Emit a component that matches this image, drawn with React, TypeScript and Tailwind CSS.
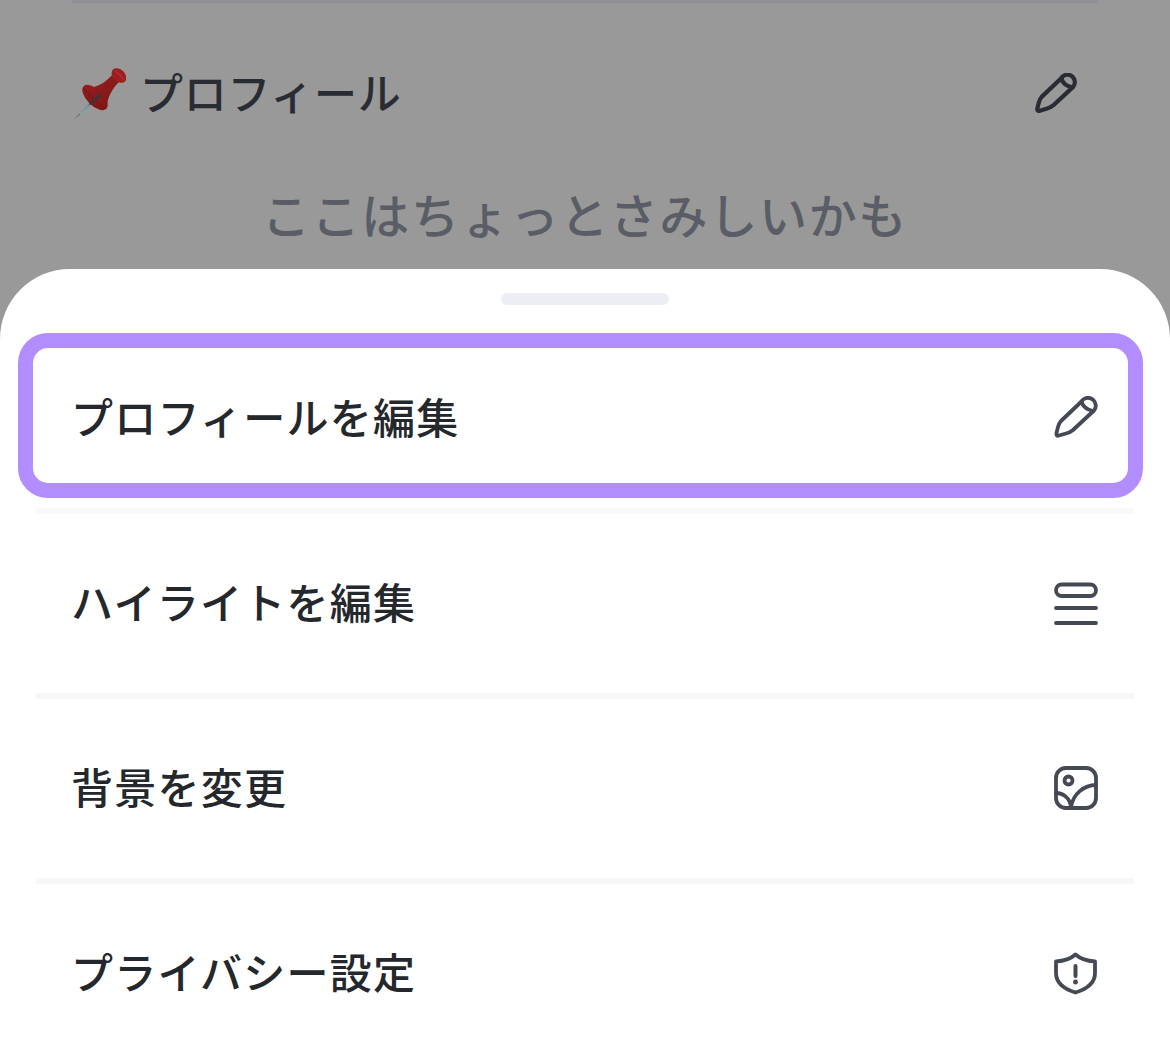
const font = { fontFamily: '"Noto Sans CJK JP", sans-serif' };

const PencilIcon = ({ className, sw = 3.8 }: { className: string; sw?: number }) => (
  <svg viewBox="0 0 44 44" fill="none" stroke="currentColor" strokeWidth={sw} strokeLinecap="round" strokeLinejoin="round" className={className}>
    <path d="M27.5 5.5 L7 25 Q5 27 4 31 L2.5 37 Q2 40.5 5 39.5 L12 37.5 Q16 36.5 19 34 L40 14.5 A7.8 7.8 0 0 0 28.5 4 Z" />
    <path d="M27.5 5.5 Q29.5 13 39 15" />
  </svg>
);

const LinesIcon = () => (
  <svg viewBox="0 0 44 44" fill="none" stroke="currentColor" strokeWidth={3.8} strokeLinecap="round" className="w-[44px] h-[44px]">
    <rect x="2" y="3.5" width="40" height="11.5" rx="5.7" />
    <path d="M2 27H42" />
    <path d="M2 42H42" />
  </svg>
);

const ImageIcon = () => (
  <svg viewBox="0 0 44 44" fill="none" stroke="currentColor" strokeWidth={3.8} strokeLinecap="round" className="w-[44px] h-[44px]">
    <rect x="2" y="2" width="40" height="40" rx="10" />
    <circle cx="14.5" cy="14.5" r="4" />
    <path d="M42 19C30 19 19 28 17 41" />
    <path d="M2 27C9 27 16 32 17 41" />
  </svg>
);

const ShieldIcon = () => (
  <svg viewBox="0 0 44 44" fill="none" stroke="currentColor" strokeWidth={3.8} strokeLinecap="round" strokeLinejoin="round" className="w-[44px] h-[44px]">
    <path d="M21.5 3.5C26 7.5 33 10 41 10.5V22C41 32 33 38 21.5 41.5C10 38 2 32 2 22V10.5C10 10 17 7.5 21.5 3.5Z" />
    <path d="M21.5 15V25" strokeWidth={4} />
    <path d="M21.5 31V31.2" strokeWidth={4.8} />
  </svg>
);

const PinIcon = () => (
  <svg viewBox="0 0 52 52" className="w-[52px] h-[52px] shrink-0">
    <defs>
      <linearGradient id="pinBody" x1="0" y1="0" x2="1" y2="1">
        <stop offset="0" stopColor="#9c1e1e" />
        <stop offset="1" stopColor="#761717" />
      </linearGradient>
    </defs>
    <ellipse cx="21" cy="29.5" rx="16" ry="8" transform="rotate(45 21 29.5)" fill="url(#pinBody)" />
    <path d="M15 20C24 19 32 14 38 7L45 14C39 20 34 28 33 37C28 32 20 26 15 20Z" fill="url(#pinBody)" />
    <ellipse cx="45" cy="7.5" rx="8.5" ry="6" transform="rotate(45 45 7.5)" fill="#9c1e1e" />
    <path d="M41 3C44 5 48 9 50 12" stroke="#b83333" strokeWidth="1.2" fill="none" />
    <path d="M9 20C15 26 24 35 31 40" stroke="#6d1515" strokeWidth="1" fill="none" />
    <path d="M0 51.5L25 25.5L27 27.5Z" fill="#2c3a42" />
    <path d="M5 46L15 36L16 37L6.5 46.5Z" fill="#7fa6b8" />
  </svg>
);

const rows = [
  { label: "ハイライトを編集", icon: <LinesIcon /> },
  { label: "背景を変更", icon: <ImageIcon /> },
  { label: "プライバシー設定", icon: <ShieldIcon /> },
];

export default function App() {
  return (
    <div className="w-[1170px] h-[1063px] overflow-hidden bg-[#999999] flex flex-col" style={font}>
      <div className="h-[269px] shrink-0 flex flex-col">
        <div className="mx-[72px] h-[3px] bg-[#8f8f98]" />
        <div className="flex items-center justify-between pl-[74px] pr-[93px] mt-[65px]">
          <div className="flex items-center gap-[14px]">
            <PinIcon />
            <span className="block h-[52px] text-[43px] leading-[46px] font-medium tracking-[0.7px] text-[#2a2c33]">プロフィール</span>
          </div>
          <span className="text-[#2a2c33]"><PencilIcon className="w-[42px] h-[42px]" sw={4.4} /></span>
        </div>
        <p className="text-center mt-[63px] text-[48px] leading-[60px] font-medium tracking-[1.7px] text-[#5a5d66]">ここはちょっとさみしいかも</p>
      </div>

      <div className="flex-1 bg-white rounded-t-[70px] flex flex-col">
        <div className="mx-auto mt-[24px] w-[168px] h-[12px] rounded-full bg-[#eceef3]" />
        <div className="mt-[28px] mx-[18px] mr-[27px] h-[165px] border-[15px] border-[#b18dff] rounded-[30px] flex items-center justify-between pl-[38px] pr-[30px] text-[#24282c]">
          <span className="text-[42px] leading-[52px] font-medium tracking-[1.25px]">プロフィールを編集</span>
          <span className="text-[#454954] mt-[4px]"><PencilIcon className="w-[44px] h-[44px]" /></span>
        </div>
        <div className="mx-[36px] mt-[10px] h-[6px] bg-[#fbf8f8]" />
        {rows.map((row, i) => (
          <div key={row.label}>
            <div className="h-[179px] flex items-center justify-between pl-[71px] pr-[72px] text-[#24282c]">
              <span className="block h-[52px] text-[42px] leading-[46px] font-medium tracking-[1.25px]">{row.label}</span>
              <span className="text-[#454954] mb-[2px]">{row.icon}</span>
            </div>
            {i < rows.length - 1 && <div className="mx-[36px] h-[6px] bg-[#f7f7f7]" />}
          </div>
        ))}
      </div>
    </div>
  );
}
